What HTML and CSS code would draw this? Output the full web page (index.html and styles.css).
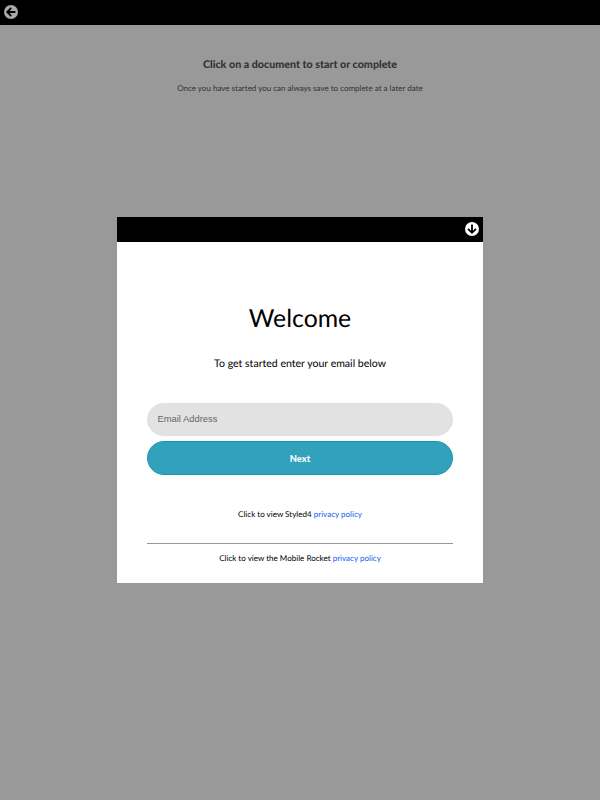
FILE: index.html
```html
<!DOCTYPE html>
<html lang="en">
<head>
<meta charset="utf-8">
<title>Documents</title>
<link rel="stylesheet" href="styles.css">
</head>
<body>
<header class="topbar">
  <svg class="icon back" viewBox="0 0 14 14"><circle cx="7" cy="7" r="7"/><path d="M11.4 7H3.5M7.2 3L3.2 7L7.2 11"/></svg>
</header>
<main class="page">
  <h1 class="page-title">Click on a document to start or complete</h1>
  <p class="page-note">Once you have started you can always save to complete at a later date</p>
</main>
<div class="overlay">
  <section class="modal">
    <div class="modal-bar">
      <svg class="icon" viewBox="0 0 14 14"><circle cx="7" cy="7" r="7"/><path d="M7 2.6V10.5M3 6.8L7 10.8L11 6.8"/></svg>
    </div>
    <form class="modal-body">
      <h2 class="welcome">Welcome</h2>
      <p class="intro">To get started enter your email below</p>
      <input class="email" type="email" placeholder="Email Address">
      <button class="next" type="button">Next</button>
      <p class="policy">Click to view Styled4 <a href="#">privacy policy</a></p>
      <p class="policy footer">Click to view the Mobile Rocket <a href="#">privacy policy</a></p>
    </form>
  </section>
</div>
</body>
</html>
```
FILE: styles.css
```css
* { box-sizing: border-box; margin: 0; }
body { height: 800px; background: #99999a; font-family: Lato, sans-serif; overflow: hidden; text-rendering: geometricPrecision; }
.topbar { height: 25px; background: #000; padding: 5px 4px; }
.icon { display: block; width: 14px; height: 14px; fill: #fff; }
.icon path { fill: none; stroke: #000; stroke-width: 1.8; }
.back { fill: #a9a9a9; }
.page { padding-top: 33px; text-align: center; color: #333336; }
.page-title { font-size: 10.7px; line-height: 14px; font-weight: 900; }
.page-note { margin-top: 10px; font-size: 8px; line-height: 12px; }
.overlay { position: absolute; inset: 0; display: flex; align-items: center; justify-content: center; }
.modal { width: 366px; height: 366px; background: #fff; color: #000; }
.modal-bar { height: 25px; background: #000; padding: 5px 4px; display: flex; justify-content: flex-end; }
.modal-body { padding: 0 30px; text-align: center; }
.welcome { padding-top: 61px; font-size: 24.8px; line-height: 32px; font-weight: 400; }
.intro { margin-top: 22px; font-size: 10.55px; line-height: 14px; }
.email { display: block; width: 100%; height: 33px; margin-top: 32px; padding: 0 9.5px 2px; border: 1px solid #dfdfdf; border-radius: 17px; background: #e2e2e2; font: 9.4px "Liberation Sans", sans-serif; }
.email::placeholder { color: #666; }
.next { display: block; width: 100%; height: 34px; margin-top: 5px; border: 1px solid #1699b5; border-radius: 17px; background: #32a1bc; color: #fff; font: 900 9.3px Lato, sans-serif; }
.policy { margin-top: 33px; font-size: 8.05px; line-height: 12px; }
.policy a { color: #1260f0; text-decoration: none; }
.policy.footer { margin-top: 23px; border-top: 1px solid #999; padding-top: 8px; }
```
